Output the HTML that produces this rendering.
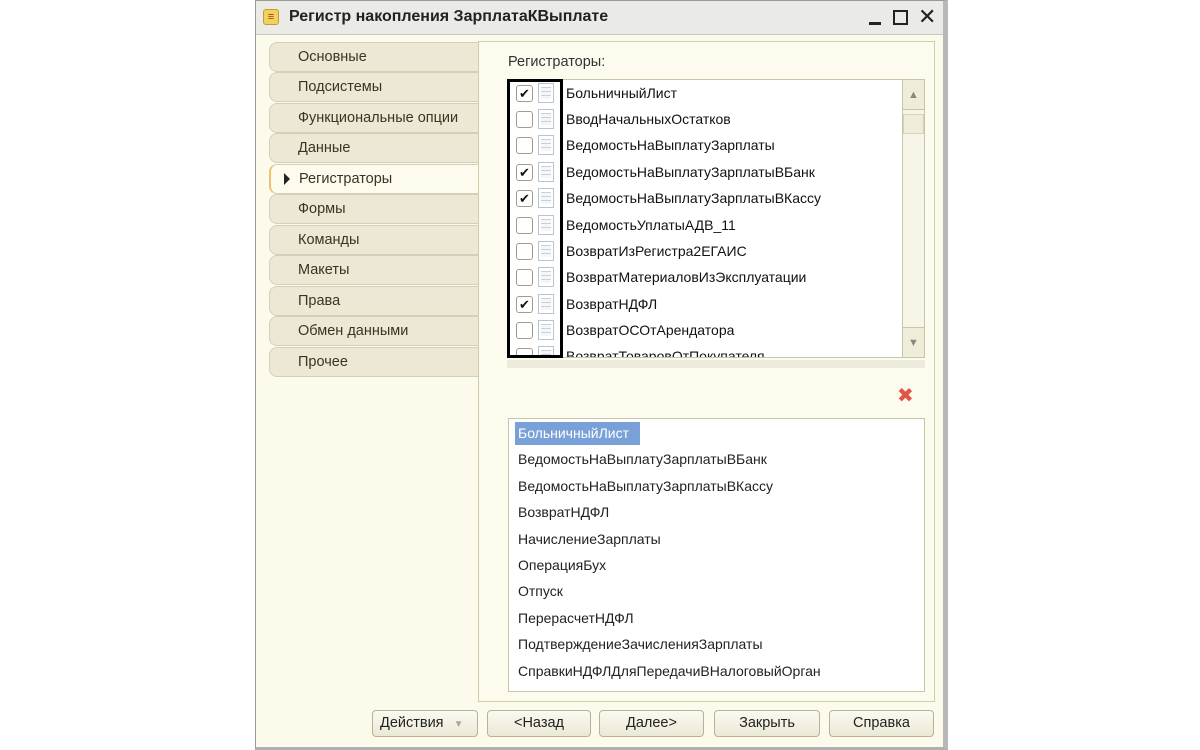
<!DOCTYPE html>
<html><head><meta charset="utf-8"><style>
*{margin:0;padding:0;box-sizing:border-box}
body{width:1200px;height:750px;background:#fff;position:relative;overflow:hidden;font-family:"Liberation Sans","DejaVu Sans",sans-serif;font-size:14px;color:#2a2a1a}
.a{position:absolute}
.win{left:255px;top:0;width:693px;height:750px;background:#fbfaeb;border:1px solid #9a9a9a;border-right:5px solid #b8b8b8;border-bottom:3px solid #b0b0b0}
.title{left:0;top:0;width:687px;height:34px;background:#eaeae6;border-bottom:1px solid #c8c8c0}
.tab{left:13px;width:210px;height:30px;background:#ece8d5;border:1px solid #d4d0b8;border-radius:8px 0 0 8px;padding-left:28px;line-height:28px;color:#3a3420;font-size:14.5px}
.panel{left:222px;top:40px;width:457px;height:661px;border:1px solid #cfcca8;background:#fcfbee}
.row{position:absolute;left:0;height:26px;line-height:26px;font-size:14px;color:#111}
.cb{position:absolute;left:8px;top:5px;width:17px;height:17px;border:1px solid #a09e88;border-radius:3px;background:#fff;font-size:13px;line-height:15px;text-align:center;color:#111}
.doc{position:absolute;left:30px;top:3px;width:16px;height:20px;border:1px solid #b8c4d0;background:repeating-linear-gradient(#f4f6f8 0 3px,#c8d0da 3px 4px);background-clip:content-box;padding:3px 2px}
.btn{top:709px;height:27px;border:1px solid #b6b29a;border-radius:4px;background:linear-gradient(#fbfaf0,#ebe8d6);text-align:center;line-height:25px;font-size:14.5px;color:#222}
</style></head><body>
<div class="a win">
 <div class="a title">
  <div class="a" style="left:7px;top:8px;width:16px;height:16px;background:#f4d060;border:1px solid #c89a30;border-radius:3px;font-size:11px;line-height:14px;text-align:center;color:#8a4a00">≡</div>
  <div class="a" style="left:33px;top:7px;font-weight:bold;font-size:16px;color:#222">Регистр накопления ЗарплатаКВыплате</div>
  <div class="a" style="left:613px;top:21px;width:12px;height:3px;background:#222"></div>
  <div class="a" style="left:637px;top:9px;width:15px;height:15px;border:2px solid #222"></div>
  <div class="a" style="left:662px;top:3px;font-size:22px;font-weight:bold;color:#222">✕</div>
 </div>
 <div class="a tab" style="top:41px">Основные</div>
 <div class="a tab" style="top:71px">Подсистемы</div>
 <div class="a tab" style="top:102px">Функциональные опции</div>
 <div class="a tab" style="top:132px">Данные</div>
 <div class="a tab" style="top:163px;background:#fcfbee;border-left:2px solid #f0c070">Регистраторы</div>
 <div class="a" style="left:28px;top:172px;width:0;height:0;border-left:6px solid #222;border-top:6px solid transparent;border-bottom:6px solid transparent"></div>
 <div class="a tab" style="top:193px">Формы</div>
 <div class="a tab" style="top:224px">Команды</div>
 <div class="a tab" style="top:254px">Макеты</div>
 <div class="a tab" style="top:285px">Права</div>
 <div class="a tab" style="top:315px">Обмен данными</div>
 <div class="a tab" style="top:346px">Прочее</div>
 <div class="a panel">
  <div class="a" style="left:29px;top:12px;font-size:14.5px;color:#333">Регистраторы:</div>
  <div class="a" style="left:28px;top:37px;width:418px;height:279px;background:#fff;border:1px solid #c8c6a8;overflow:hidden">
   <div class="row" style="top:0px"><span class="cb">✔</span><span class="doc"></span><span style="position:absolute;left:58px">БольничныйЛист</span></div>
   <div class="row" style="top:26px"><span class="cb"></span><span class="doc"></span><span style="position:absolute;left:58px">ВводНачальныхОстатков</span></div>
   <div class="row" style="top:52px"><span class="cb"></span><span class="doc"></span><span style="position:absolute;left:58px">ВедомостьНаВыплатуЗарплаты</span></div>
   <div class="row" style="top:79px"><span class="cb">✔</span><span class="doc"></span><span style="position:absolute;left:58px">ВедомостьНаВыплатуЗарплатыВБанк</span></div>
   <div class="row" style="top:105px"><span class="cb">✔</span><span class="doc"></span><span style="position:absolute;left:58px">ВедомостьНаВыплатуЗарплатыВКассу</span></div>
   <div class="row" style="top:132px"><span class="cb"></span><span class="doc"></span><span style="position:absolute;left:58px">ВедомостьУплатыАДВ_11</span></div>
   <div class="row" style="top:158px"><span class="cb"></span><span class="doc"></span><span style="position:absolute;left:58px">ВозвратИзРегистра2ЕГАИС</span></div>
   <div class="row" style="top:184px"><span class="cb"></span><span class="doc"></span><span style="position:absolute;left:58px">ВозвратМатериаловИзЭксплуатации</span></div>
   <div class="row" style="top:211px"><span class="cb">✔</span><span class="doc"></span><span style="position:absolute;left:58px">ВозвратНДФЛ</span></div>
   <div class="row" style="top:237px"><span class="cb"></span><span class="doc"></span><span style="position:absolute;left:58px">ВозвратОСОтАрендатора</span></div>
   <div class="row" style="top:263px"><span class="cb"></span><span class="doc"></span><span style="position:absolute;left:58px">ВозвратТоваровОтПокупателя</span></div>
   <div class="a" style="left:394px;top:0;width:22px;height:277px;background:#f6f5e8;border-left:1px solid #c8c6a8">
    <div class="a" style="left:0;top:0;width:21px;height:30px;background:#efedda;border-bottom:1px solid #c8c6a8;color:#888;font-size:11px;text-align:center;line-height:30px">▲</div>
    <div class="a" style="left:0;top:34px;width:21px;height:20px;background:#efedda;border:1px solid #d4d2bc"></div>
    <div class="a" style="left:0;top:247px;width:21px;height:30px;background:#efedda;border-top:1px solid #c8c6a8;color:#888;font-size:11px;text-align:center;line-height:30px">▼</div>
   </div>
  </div>
  <div class="a" style="left:28px;top:37px;width:56px;height:279px;border:3px solid #000"></div>
  <div class="a" style="left:28px;top:318px;width:418px;height:8px;background:#ecebdc"></div>
  <div class="a" style="left:418px;top:341px;color:#e05545;font-size:20px;font-weight:bold">✖</div>
  <div class="a" style="left:29px;top:376px;width:417px;height:274px;background:#fff;border:1px solid #c8c6a8">
   <div class="a" style="left:6px;top:3px;width:125px;height:23px;background:#7aa0d8"></div>
   <div class="a" style="left:9px;top:4px;line-height:20px;font-size:14px;color:#222">
    <div style="color:#fff;height:26.4px">БольничныйЛист</div>
    <div style="height:26.4px">ВедомостьНаВыплатуЗарплатыВБанк</div>
    <div style="height:26.4px">ВедомостьНаВыплатуЗарплатыВКассу</div>
    <div style="height:26.4px">ВозвратНДФЛ</div>
    <div style="height:26.4px">НачислениеЗарплаты</div>
    <div style="height:26.4px">ОперацияБух</div>
    <div style="height:26.4px">Отпуск</div>
    <div style="height:26.4px">ПерерасчетНДФЛ</div>
    <div style="height:26.4px">ПодтверждениеЗачисленияЗарплаты</div>
    <div style="height:26.4px">СправкиНДФЛДляПередачиВНалоговыйОрган</div>
   </div>
  </div>
 </div>
 <div class="a btn" style="left:116px;width:106px;text-align:left;padding-left:7px">Действия <span style="color:#aaa;font-size:10px;margin-left:6px">▼</span></div>
 <div class="a btn" style="left:231px;width:104px">&lt;Назад</div>
 <div class="a btn" style="left:343px;width:105px">Далее&gt;</div>
 <div class="a btn" style="left:458px;width:106px">Закрыть</div>
 <div class="a btn" style="left:573px;width:105px">Справка</div>
</div>
</body></html>
